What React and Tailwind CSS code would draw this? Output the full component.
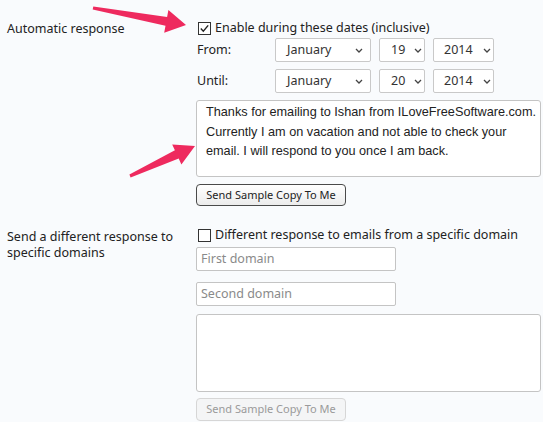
import React from "react";

const ui = { fontFamily: '"Noto Sans", "Open Sans", sans-serif' };
const arial = { fontFamily: '"Liberation Sans", Arial, sans-serif' };

function Chevron() {
  return (
    <svg width="8" height="5" viewBox="0 0 8 5" className="shrink-0">
      <path d="M1 1 L4 4 L7 1" fill="none" stroke="#444" strokeWidth="1.3" />
    </svg>
  );
}

function Select({ value, w, pl, gap }) {
  return (
    <div
      className="h-[24px] bg-white border border-[#c9c9c9] rounded-[2px] flex items-center text-[12.5px] text-[#333]"
      style={{ width: w, paddingLeft: pl }}
    >
      <span>{value}</span>
      <span style={{ marginLeft: gap }} className="flex">
        <Chevron />
      </span>
    </div>
  );
}

function Checkbox({ checked }) {
  return (
    <svg width="13" height="13" viewBox="0 0 13 13" className="shrink-0">
      <rect x="0.5" y="0.5" width="12" height="12" fill="white" stroke="#333" strokeWidth="1" />
      {checked && (
        <path d="M2.8 6.6 L5.3 9.2 L10.2 3.4" fill="none" stroke="#222" strokeWidth="1.4" />
      )}
    </svg>
  );
}

export default function App() {
  return (
    <div className="relative w-[543px] h-[422px] overflow-hidden bg-[#f9fbfd] text-[#222]" style={ui}>
      <div className="grid grid-cols-[189px_1fr] pl-[7px] pt-[20px]">
        {/* Section 1 */}
        <div className="text-[12.5px] leading-[16px] pt-[1px]">Automatic response</div>
        <div className="flex flex-col">
          <div className="flex items-center h-[16px] gap-[4px] pl-[2px] text-[12.5px]">
            <Checkbox checked />
            <span>Enable during these dates (inclusive)</span>
          </div>
          <div className="flex items-center mt-[2px] h-[24px]">
            <span className="w-[79px] pl-[1px] text-[12.5px]">From:</span>
            <Select value="January" w={96} pl={11} gap={24} />
            <div className="w-[8px]" />
            <Select value="19" w={46} pl={11} gap={9} />
            <div className="w-[8px]" />
            <Select value="2014" w={61} pl={10} gap={10} />
          </div>
          <div className="flex items-center mt-[7px] h-[24px]">
            <span className="w-[79px] pl-[1px] text-[12.5px]">Until:</span>
            <Select value="January" w={96} pl={11} gap={24} />
            <div className="w-[8px]" />
            <Select value="20" w={46} pl={11} gap={9} />
            <div className="w-[8px]" />
            <Select value="2014" w={61} pl={10} gap={10} />
          </div>
          <div
            className="mt-[7px] w-[345px] h-[77px] bg-white border border-[#c4c4c4] rounded-[3px] pl-[9px] pt-[2px] text-[12.7px] leading-[19.5px] text-[#222] whitespace-nowrap overflow-hidden"
            style={arial}
          >
            Thanks for emailing to Ishan from ILoveFreeSoftware.com.
            <br />
            Currently I am on vacation and not able to check your
            <br />
            email. I will respond to you once I am back.
          </div>
          <button
            className="mt-[7px] w-[150px] h-[22px] rounded-[4px] border border-[#4a4a4a] bg-gradient-to-b from-white to-[#ececec] text-[11px] text-[#222] flex items-center justify-center"
            style={ui}
          >
            Send Sample Copy To Me
          </button>
        </div>

        {/* Section 2 */}
        <div className="text-[12.5px] leading-[16px] mt-[23px]">
          Send a different response to
          <br />
          specific domains
        </div>
        <div className="flex flex-col mt-[21px]">
          <div className="flex items-center h-[16px] gap-[4px] pl-[2px] text-[12.5px]">
            <Checkbox />
            <span>Different response to emails from a specific domain</span>
          </div>
          <div className="mt-[4px] w-[200px] h-[24px] bg-white border border-[#c4c4c4] rounded-[2px] pl-[4px] flex items-center text-[12.5px] text-[#8a8a8a]">
            First domain
          </div>
          <div className="mt-[11px] w-[200px] h-[24px] bg-white border border-[#c4c4c4] rounded-[2px] pl-[4px] flex items-center text-[12.5px] text-[#8a8a8a]">
            Second domain
          </div>
          <div className="mt-[8px] w-[345px] h-[78px] bg-white border border-[#c4c4c4] rounded-[3px]" />
          <button
            className="mt-[6px] w-[150px] h-[23px] rounded-[4px] border border-[#d6d6d6] bg-[#f4f5f6] text-[11px] text-[#9a9a9a] flex items-center justify-center"
            style={ui}
          >
            Send Sample Copy To Me
          </button>
        </div>
      </div>

      <svg className="absolute inset-0 pointer-events-none" width="543" height="422" viewBox="0 0 543 422">
        <polygon
          points="93.3,6.5 167.1,17 168.4,10.1 186,25 164.2,32.7 165.5,25.8 92.7,9.5"
          fill="#ee2a5e"
        />
        <polygon
          points="129.4,174.6 174.9,150.3 172.2,144.4 195,146 181.4,164.4 178.7,158.5 130.6,177.4"
          fill="#ee2a5e"
        />
      </svg>
    </div>
  );
}
